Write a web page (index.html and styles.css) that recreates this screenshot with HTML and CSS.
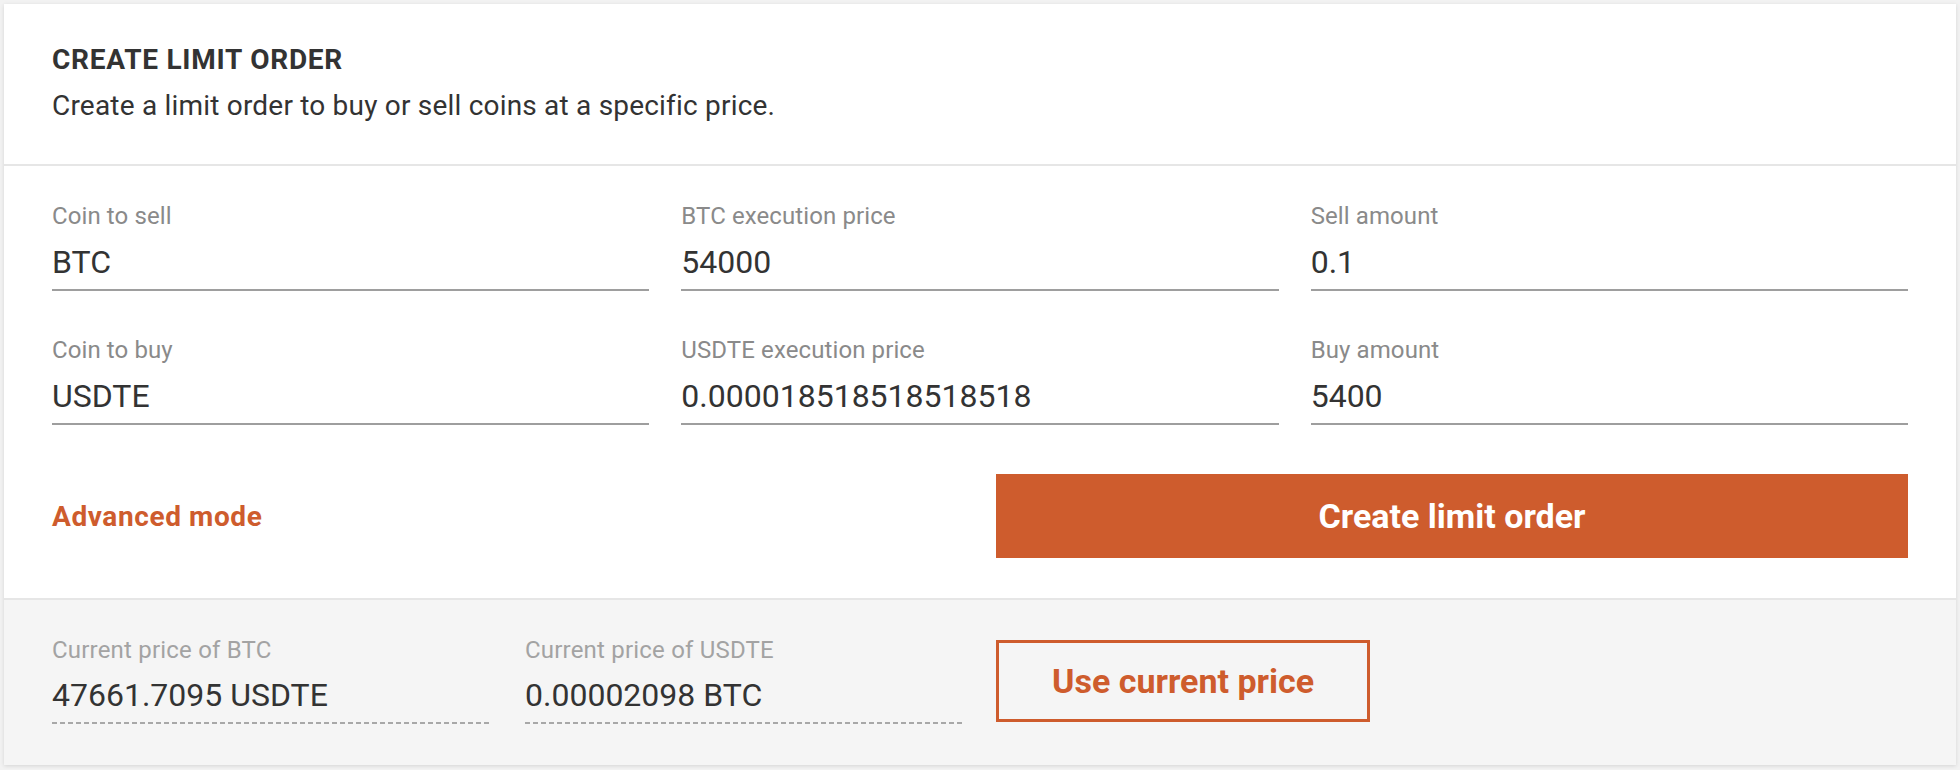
FILE: index.html
```html
<!DOCTYPE html>
<html lang="en">
<head>
<meta charset="utf-8">
<title>Create limit order</title>
<link rel="stylesheet" href="styles.css">
</head>
<body>
<div class="card">
  <header class="card-head">
    <h1 class="card-title">CREATE LIMIT ORDER</h1>
    <p class="card-desc">Create a limit order to buy or sell coins at a specific price.</p>
  </header>
  <section class="card-body">
    <div class="fields">
      <label class="field"><span class="field-label">Coin to sell</span><span class="field-value">BTC</span></label>
      <label class="field"><span class="field-label">BTC execution price</span><span class="field-value">54000</span></label>
      <label class="field"><span class="field-label">Sell amount</span><span class="field-value">0.1</span></label>
      <label class="field"><span class="field-label">Coin to buy</span><span class="field-value">USDTE</span></label>
      <label class="field"><span class="field-label">USDTE execution price</span><span class="field-value">0.000018518518518518</span></label>
      <label class="field"><span class="field-label">Buy amount</span><span class="field-value">5400</span></label>
    </div>
    <div class="actions">
      <a class="link-advanced" href="#">Advanced mode</a>
      <button class="btn btn-primary" type="button">Create limit order</button>
    </div>
  </section>
  <footer class="card-foot">
    <div class="prices">
      <div class="price">
        <span class="price-label">Current price of BTC</span>
        <span class="price-value">47661.7095 USDTE</span>
      </div>
      <div class="price">
        <span class="price-label">Current price of USDTE</span>
        <span class="price-value">0.00002098 BTC</span>
      </div>
    </div>
    <div class="foot-action">
      <button class="btn btn-outline" type="button">Use current price</button>
    </div>
  </footer>
</div>
</body>
</html>
```
FILE: styles.css
```css
* { box-sizing: border-box; }
html, body { margin: 0; }
body {
  background: #f2f2f2;
  padding: 4px;
  font-family: Roboto, "Liberation Sans", sans-serif;
  color: #333;
}
.card {
  background: #fff;
  box-shadow: 0 1px 4px rgba(0,0,0,0.12);
}
.card-head {
  padding: 40px 48px 42px;
  border-bottom: 2px solid #e6e6e6;
}
.card-title {
  margin: 0;
  font-size: 28px;
  line-height: 32px;
  letter-spacing: 0.75px;
  font-weight: 700;
  color: #333;
}
.card-desc {
  margin: 14px 0 0;
  font-size: 28px;
  line-height: 32px;
  letter-spacing: 0.2px;
  color: #333;
}
.card-body {
  padding: 36px 48px 40px;
}
.fields {
  display: grid;
  grid-template-columns: repeat(3, 1fr);
  column-gap: 32px;
  row-gap: 45px;
}
.field {
  display: flex;
  flex-direction: column;
  border-bottom: 2px solid #9e9e9e;
  padding-bottom: 9px;
}
.field-label {
  font-size: 24px;
  line-height: 28px;
  letter-spacing: 0.1px;
  color: #8a8a8a;
}
.field-value {
  margin-top: 14px;
  font-size: 32px;
  line-height: 36px;
  color: #333;
}
.actions {
  margin-top: 49px;
  display: grid;
  grid-template-columns: 1fr 1fr;
  column-gap: 32px;
  align-items: center;
}
.link-advanced {
  color: #ce5c2d;
  font-weight: 700;
  font-size: 28px;
  letter-spacing: 0.6px;
  text-decoration: none;
}
.btn {
  font-family: inherit;
  font-weight: 700;
  font-size: 34px;
  cursor: pointer;
}
.btn-primary {
  height: 84px;
  background: #ce5c2d;
  color: #fff;
  border: 0;
}
.card-foot {
  background: #f5f5f5;
  border-top: 2px solid #e6e6e6;
  padding: 36px 48px 41px;
  display: grid;
  grid-template-columns: 1fr 1fr;
  column-gap: 32px;
}
.prices {
  display: grid;
  grid-template-columns: 1fr 1fr;
  column-gap: 34px;
}
.price {
  display: flex;
  flex-direction: column;
  background: repeating-linear-gradient(to right, #a8a8a8 0 5px, transparent 5px 8px) left bottom / 100% 2px no-repeat;
  padding-bottom: 11px;
}
.price-label {
  font-size: 24px;
  line-height: 28px;
  letter-spacing: 0.2px;
  color: #a3a3a3;
}
.price-value {
  margin-top: 13px;
  font-size: 32px;
  line-height: 36px;
  color: #333;
}
.foot-action {
  padding-top: 4px;
}
.btn-outline {
  height: 82px;
  padding: 0 53px;
  background: transparent;
  color: #ce5c2d;
  border: 3px solid #ce5c2d;
}
```
